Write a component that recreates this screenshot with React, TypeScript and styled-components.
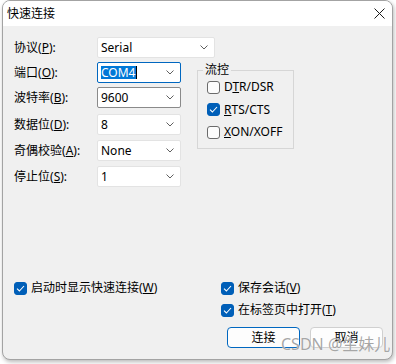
import React from "react";
import styled, { createGlobalStyle } from "styled-components";

const GlobalStyle = createGlobalStyle`
  html, body {
    margin: 0;
    padding: 0;
    background: #ffffff;
  }
  body {
    font-family: "Noto Sans", "Noto Sans CJK SC", sans-serif;
    font-size: 12px;
    color: #000;
  }
  * {
    box-sizing: border-box;
  }
`;

const Page = styled.div`
  width: 396px;
  height: 364px;
  padding-left: 2px;
`;

const Window = styled.div`
  position: relative;
  width: 391px;
  height: 360px;
  border: 1px solid #a3a3a3;
  border-radius: 8px;
  overflow: hidden;
  background: #f0f0f0;
  display: flex;
  flex-direction: column;
  box-shadow: 1px 2px 4px rgba(0, 0, 0, 0.28);
`;

const TitleBar = styled.div`
  height: 25px;
  flex: none;
  background: #ffffff;
  display: flex;
  align-items: center;
  justify-content: space-between;
  padding: 0 7px 0 4px;
`;

const Title = styled.span`
  font-size: 12px;
  line-height: 16px;
`;

const Body = styled.div`
  flex: 1;
  display: flex;
  flex-direction: column;
  padding: 11px 9px 11px 11px;
`;

const TopSection = styled.div`
  display: flex;
  align-items: flex-start;
`;

const Form = styled.div`
  display: flex;
  flex-direction: column;
  width: 167px;
`;

const FieldRow = styled.div<{ $mt: number }>`
  display: flex;
  align-items: center;
  height: 21px;
  margin-top: ${(p) => p.$mt}px;
`;

const Label = styled.span`
  width: 83px;
  flex: none;
  line-height: 16px;
  white-space: nowrap;
`;

const Key = styled.u`
  text-decoration: underline;
  text-underline-offset: 1px;
`;

const Combo = styled.div<{ $w: number; $border: string }>`
  flex: none;
  width: ${(p) => p.$w}px;
  height: 21px;
  background: #ffffff;
  border: 1px solid ${(p) => p.$border};
  border-radius: 2px;
  display: flex;
  align-items: center;
  justify-content: space-between;
  padding: 0 6px 0 3px;
  line-height: 16px;
`;

const Selected = styled.span`
  background: #0078d7;
  color: #ffffff;
  line-height: 13px;
  padding: 0 1px 0 0;
`;

const Caret = styled.span`
  display: inline-block;
  width: 1px;
  height: 13px;
  background: #000;
  vertical-align: middle;
`;

const ComboText = styled.span`
  display: flex;
  align-items: center;
`;

const Group = styled.fieldset`
  width: 97px;
  margin: 26px 0 0 16px;
  padding: 0 6px 6px 9px;
  border: 1px solid #d6d6d6;
  border-radius: 0;
  display: flex;
  flex-direction: column;
  gap: 2.5px;
`;

const Legend = styled.legend`
  padding: 0 2px;
  margin-left: -4px;
  line-height: 14px;
  font-size: 12px;
`;

const CheckRow = styled.label`
  display: flex;
  align-items: center;
  gap: 4px;
  height: 20px;
  line-height: 16px;
  white-space: nowrap;
`;

const Box = styled.span<{ $checked: boolean }>`
  flex: none;
  width: 13px;
  height: 13px;
  border-radius: 3px;
  border: 1px solid ${(p) => (p.$checked ? "#005fb8" : "#6b6b6b")};
  background: ${(p) => (p.$checked ? "#005fb8" : "#fcfcfc")};
  display: flex;
  align-items: center;
  justify-content: center;
`;

const BottomSection = styled.div`
  margin-top: auto;
  display: grid;
  grid-template-columns: 207px 1fr;
`;

const Stack = styled.div`
  display: flex;
  flex-direction: column;
  gap: 2px;
`;

const ButtonRow = styled.div`
  display: flex;
  justify-content: flex-end;
  gap: 10px;
  margin-top: 5px;
`;

const Button = styled.button<{ $primary?: boolean }>`
  width: 73px;
  height: 21px;
  padding: 0;
  border-radius: 4px;
  background: #fdfdfd;
  border: 1px solid ${(p) => (p.$primary ? "#0067c0" : "#d0d0d0")};
  font-family: inherit;
  font-size: 12px;
  line-height: 16px;
  color: #000;
`;

const Watermark = styled.div`
  position: absolute;
  left: 278px;
  top: 333px;
  font-size: 16px;
  line-height: 20px;
  color: rgba(150, 150, 150, 0.85);
  text-shadow: 0 0 1px #ffffff;
  white-space: nowrap;
  pointer-events: none;
`;

const Chevron = () => (
  <svg width="8" height="5" viewBox="0 0 8 5">
    <path d="M0.5 0.5 L4 4 L7.5 0.5" fill="none" stroke="#5f5f5f" strokeWidth="1" />
  </svg>
);

const CloseIcon = () => (
  <svg width="11" height="11" viewBox="0 0 11 11">
    <path d="M0.5 0.5 L10.5 10.5 M10.5 0.5 L0.5 10.5" stroke="#1a1a1a" strokeWidth="1" />
  </svg>
);

const CheckMark = () => (
  <svg width="9" height="7" viewBox="0 0 9 7">
    <path d="M1 3.6 L3.4 6 L8 1" fill="none" stroke="#ffffff" strokeWidth="1.1" />
  </svg>
);

function Check({ checked, children }: { checked: boolean; children: React.ReactNode }) {
  return (
    <CheckRow>
      <Box $checked={checked}>{checked && <CheckMark />}</Box>
      <span>{children}</span>
    </CheckRow>
  );
}

const fields = [
  { label: "协议", key: "P", value: "Serial", mt: 0, w: 118, border: "#e3e3e3" },
  { label: "端口", key: "O", value: "COM4", mt: 4, w: 84, border: "#0067c0", selected: true },
  { label: "波特率", key: "B", value: "9600", mt: 4, w: 84, border: "#8a8a8a" },
  { label: "数据位", key: "D", value: "8", mt: 6, w: 84, border: "#e3e3e3" },
  { label: "奇偶校验", key: "A", value: "None", mt: 5, w: 84, border: "#e3e3e3" },
  { label: "停止位", key: "S", value: "1", mt: 5, w: 84, border: "#e3e3e3" },
];

export default function App() {
  return (
    <Page>
      <GlobalStyle />
      <Window>
        <TitleBar>
          <Title>快速连接</Title>
          <CloseIcon />
        </TitleBar>
        <Body>
          <TopSection>
            <Form>
              {fields.map((f) => (
                <FieldRow key={f.key} $mt={f.mt}>
                  <Label>
                    {f.label}(<Key>{f.key}</Key>):
                  </Label>
                  <Combo $w={f.w} $border={f.border}>
                    <ComboText>
                      {f.selected ? (
                        <>
                          <Selected>{f.value}</Selected>
                          <Caret />
                        </>
                      ) : (
                        f.value
                      )}
                    </ComboText>
                    <Chevron />
                  </Combo>
                </FieldRow>
              ))}
            </Form>
            <Group>
              <Legend>流控</Legend>
              <Check checked={false}>
                D<Key>T</Key>R/DSR
              </Check>
              <Check checked>
                <Key>R</Key>TS/CTS
              </Check>
              <Check checked={false}>
                <Key>X</Key>ON/XOFF
              </Check>
            </Group>
          </TopSection>
          <BottomSection>
            <Stack>
              <Check checked>
                启动时显示快速连接(<Key>W</Key>)
              </Check>
            </Stack>
            <Stack>
              <Check checked>
                保存会话(<Key>V</Key>)
              </Check>
              <Check checked>
                在标签页中打开(<Key>T</Key>)
              </Check>
              <ButtonRow>
                <Button $primary>连接</Button>
                <Button>取消</Button>
              </ButtonRow>
            </Stack>
          </BottomSection>
        </Body>
        <Watermark>CSDN @生妹儿</Watermark>
      </Window>
    </Page>
  );
}
